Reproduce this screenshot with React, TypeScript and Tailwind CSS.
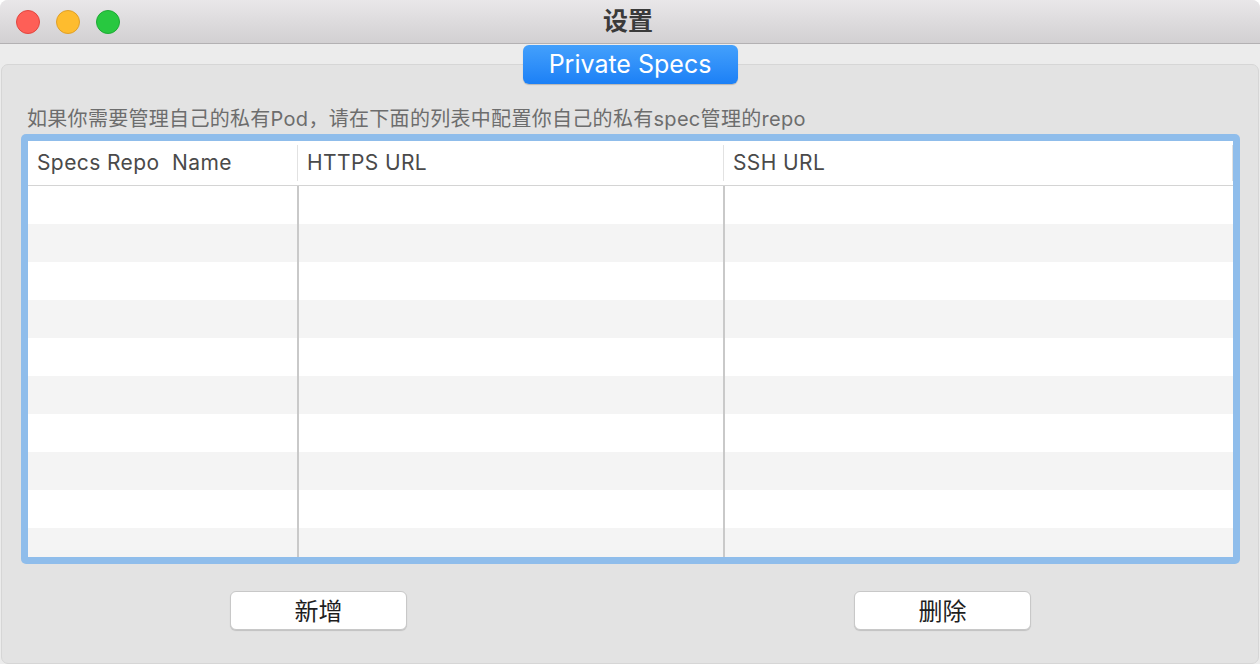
import React from 'react'

const font = {
    fontFamily: 'Inter, "Noto Sans CJK SC", sans-serif',
}

const columns = [
    { title: 'Specs Repo  Name', width: 'w-[270px]' },
    { title: 'HTTPS URL', width: 'w-[426px]' },
    { title: 'SSH URL', width: 'flex-1' },
]

const rows = Array.from({ length: 10 }, (_, i) => i)

const TrafficLights = () => (
    <div className="flex items-center gap-[16px] pl-[16px]">
        <div className="h-[24px] w-[24px] rounded-full border border-[#e2463f] bg-[#fe5f57]" />
        <div className="h-[24px] w-[24px] rounded-full border border-[#e0a028] bg-[#febc2e]" />
        <div className="h-[24px] w-[24px] rounded-full border border-[#1eaa35] bg-[#28c840]" />
    </div>
)

const ActionButton = ({ label }: { label: string }) => (
    <button className="flex h-[39px] w-[177px] items-center justify-center rounded-[6px] border border-[#c8c8c8] bg-white pt-[2px] text-[24px] text-[#1e1e1e] shadow-[0_1px_1px_rgba(0,0,0,0.15)]">
        {label}
    </button>
)

const SpecsTable = () => (
    <div className="rounded-[5px] bg-[#8fbdeb] p-[7px]">
        <div className="flex h-[416px] flex-col overflow-hidden bg-white">
            <div className="flex h-[45px] shrink-0 border-b border-[#d4d4d4]">
                {columns.map((col) => (
                    <div
                        key={col.title}
                        className={`relative flex items-center pl-[9px] ${col.width}`}
                    >
                        <span className="whitespace-pre text-[21px] tracking-[0.4px] text-[#4a4a4a]">{col.title}</span>
                        <div className="absolute right-0 top-[4px] h-[36px] w-[1px] bg-[#e2e2e2]" />
                    </div>
                ))}
            </div>
            <div className="relative flex-1">
                {rows.map((r) => (
                    <div
                        key={r}
                        className={`h-[38px] ${r % 2 === 0 ? 'bg-white' : 'bg-[#f4f4f4]'}`}
                    />
                ))}
                <div className="absolute left-[269px] top-0 h-full w-[2px] bg-[#c9c9c9]" />
                <div className="absolute left-[695px] top-0 h-full w-[2px] bg-[#c9c9c9]" />
            </div>
        </div>
    </div>
)

export default function App() {
    return (
        <div
            className="flex h-[664px] w-[1260px] flex-col overflow-hidden rounded-t-[8px] bg-[#ececec]"
            style={font}
        >
            <div className="relative flex h-[44px] shrink-0 items-center border-b border-[#b3b1b3] bg-gradient-to-b from-[#e9e7e9] to-[#d2d0d2]">
                <TrafficLights />
                <div className="absolute inset-0 flex items-center justify-center pr-[4px]">
                    <span className="text-[25px] font-semibold text-[#3a3a3a]">设置</span>
                </div>
            </div>

            <div className="flex flex-1 flex-col px-[1px] pt-[20px]">
                <div className="relative flex flex-1 flex-col rounded-[7px] border border-[#d6d6d6] bg-[#e3e3e3] px-[19px] pt-[40px]">
                    <div className="absolute left-0 right-0 -top-[20px] flex justify-center">
                        <div className="flex h-[39px] w-[215px] items-center justify-center rounded-[6px] bg-gradient-to-b from-[#43a0fc] to-[#1b80f6] text-[25px] text-white shadow-[0_1px_1px_rgba(0,0,0,0.2)]">
                            Private Specs
                        </div>
                    </div>
                    <p className="pl-[6px] text-[20px] leading-[28px] tracking-[0.3px] text-[#6d6d6d]">
                        如果你需要管理自己的私有Pod，请在下面的列表中配置你自己的私有spec管理的repo
                    </p>
                    <div className="mt-[1px] mr-[-1px]">
                        <SpecsTable />
                    </div>
                    <div className="flex justify-between pl-[209px] pr-[208px] pt-[27px]">
                        <ActionButton label="新增" />
                        <ActionButton label="删除" />
                    </div>
                </div>
            </div>
        </div>
    )
}
